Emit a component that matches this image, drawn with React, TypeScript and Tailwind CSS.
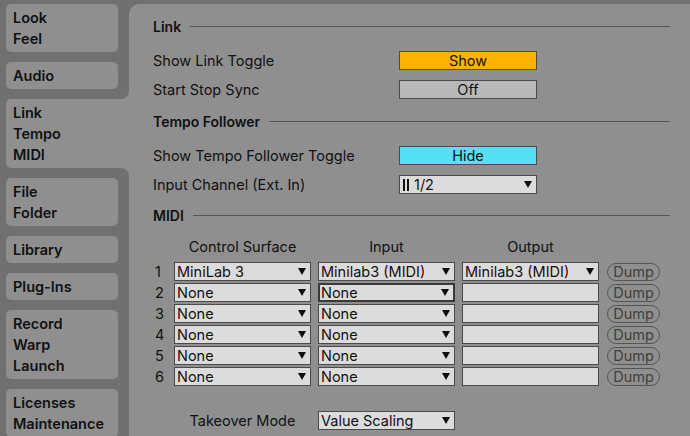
import React from "react";

const FONT = { fontFamily: "Inter, 'Open Sans', sans-serif" };

function Arrow() {
  return (
    <svg width="8" height="7" viewBox="0 0 8 7" className="shrink-0">
      <polygon points="0,0 8,0 4,7" fill="#0d0d0d" />
    </svg>
  );
}

function Drop({
  text,
  arrow = true,
  focus = false,
  w = "w-[137px]",
  bars = false,
}: {
  text?: string;
  arrow?: boolean;
  focus?: boolean;
  w?: string;
  bars?: boolean;
}) {
  return (
    <div
      className={`flex h-[19px] items-center bg-[#dcdcdc] pr-[4px] ${w} ${
        focus ? "border-2 border-[#3a3a3a] pl-[1px]" : "border border-[#4b4b4b] pl-[2px]"
      }`}
    >
      {bars && (
        <span className="mr-[5px] flex h-[12px] items-stretch gap-[2px] pl-[1px]">
          <span className="w-[2px] bg-[#111]" />
          <span className="w-[2px] bg-[#111]" />
        </span>
      )}
      <span className="flex-1 whitespace-nowrap text-[14.5px] leading-[17px] text-[#111]">{text ?? ""}</span>
      {arrow && <Arrow />}
    </div>
  );
}

function Toggle({ label, bg }: { label: string; bg: string }) {
  return (
    <div
      className={`flex h-[19px] w-[138px] items-center justify-center border border-[#4b4b4b] text-[14.5px] leading-[17px] text-[#111] ${bg}`}
    >
      {label}
    </div>
  );
}

function Section({ title, className }: { title: string; className: string }) {
  return (
    <div className={`flex h-[24px] items-center ${className}`}>
      <span className="text-[14px] font-semibold text-[#111]">{title}</span>
      <div className="ml-[9px] h-px flex-1 bg-[#555]" />
    </div>
  );
}

function Row({ label, className, children }: { label: string; className: string; children: React.ReactNode }) {
  return (
    <div className={`flex h-[19px] items-center ${className}`}>
      <span className="w-[246px] whitespace-nowrap text-[14.5px] leading-[19px] text-[#111]">{label}</span>
      {children}
    </div>
  );
}

function Tab({ lines }: { lines: string[] }) {
  return (
    <div className="w-[112px] rounded-[5px] bg-[#8f8f8f] py-[3px] pl-[7px]">
      {lines.map((l) => (
        <div key={l} className="h-[21px] text-[14.5px] font-semibold leading-[21px] text-[#111]">
          {l}
        </div>
      ))}
    </div>
  );
}

function ActiveTab({ lines }: { lines: string[] }) {
  return (
    <div className="relative w-[123px] rounded-l-[5px] bg-[#8f8f8f] py-[3px] pl-[7px]">
      {lines.map((l) => (
        <div key={l} className="h-[21px] text-[14.5px] font-semibold leading-[21px] text-[#111]">
          {l}
        </div>
      ))}
      <div className="absolute right-0 top-[-10px] h-[10px] w-[11px] bg-[#8f8f8f]">
        <div className="h-full w-full rounded-br-[8px] bg-[#707070]" />
      </div>
      <div className="absolute bottom-[-10px] right-0 h-[10px] w-[11px] bg-[#8f8f8f]">
        <div className="h-full w-full rounded-tr-[8px] bg-[#707070]" />
      </div>
    </div>
  );
}

function Dump() {
  return (
    <div className="flex h-[18px] w-[53px] items-center justify-center rounded-full border border-[#555] text-[14.5px] leading-[16px] text-[#404040]">
      Dump
    </div>
  );
}

const rows = [
  { n: "1", cs: "MiniLab 3", inp: "Minilab3 (MIDI)", out: "Minilab3 (MIDI)" },
  { n: "2", cs: "None", inp: "None", focus: true },
  { n: "3", cs: "None", inp: "None" },
  { n: "4", cs: "None", inp: "None" },
  { n: "5", cs: "None", inp: "None" },
  { n: "6", cs: "None", inp: "None" },
];

export default function App() {
  return (
    <div className="flex h-[436px] w-[690px] overflow-hidden bg-[#707070]" style={FONT}>
      {/* sidebar */}
      <div className="flex w-[129px] shrink-0 flex-col gap-[10px] pl-[6px] pt-[4px]">
        <Tab lines={["Look", "Feel"]} />
        <Tab lines={["Audio"]} />
        <ActiveTab lines={["Link", "Tempo", "MIDI"]} />
        <Tab lines={["File", "Folder"]} />
        <Tab lines={["Library"]} />
        <Tab lines={["Plug-Ins"]} />
        <Tab lines={["Record", "Warp", "Launch"]} />
        <Tab lines={["Licenses", "Maintenance"]} />
      </div>

      {/* preferences panel */}
      <div className="mt-[4px] flex-1 rounded-tl-[10px] bg-[#8f8f8f] pl-[24px] pr-[20px] pt-[10px]">
        <Section title="Link" className="" />
        <Row label="Show Link Toggle" className="mt-[13px]">
          <Toggle label="Show" bg="bg-[#ffb300]" />
        </Row>
        <Row label="Start Stop Sync" className="mt-[10px]">
          <Toggle label="Off" bg="bg-[#b8b8b8]" />
        </Row>

        <Section title="Tempo Follower" className="mt-[10px]" />
        <Row label="Show Tempo Follower Toggle" className="mt-[13px]">
          <Toggle label="Hide" bg="bg-[#55e0f5]" />
        </Row>
        <Row label="Input Channel (Ext. In)" className="mt-[10px]">
          <Drop text="1/2" bars w="w-[138px]" />
        </Row>

        <Section title="MIDI" className="mt-[9px]" />

        <div className="mt-[10px] flex h-[20px] items-center text-[14.5px] text-[#111]">
          <div className="w-[21px]" />
          <div className="w-[137px] whitespace-nowrap text-center">Control Surface</div>
          <div className="ml-[7px] w-[137px] text-center">Input</div>
          <div className="ml-[7px] w-[137px] text-center">Output</div>
        </div>

        <div className="mt-[5px] flex flex-col gap-[2px]">
          {rows.map((r) => (
            <div key={r.n} className="flex h-[19px] items-center">
              <div className="w-[21px] pl-[2px] text-[14.5px] leading-[19px] text-[#111]">{r.n}</div>
              <Drop text={r.cs} />
              <div className="ml-[7px]">
                <Drop text={r.inp} focus={!!r.focus} />
              </div>
              <div className="ml-[7px]">
                {r.out ? <Drop text={r.out} /> : <Drop arrow={false} />}
              </div>
              <div className="ml-[8px]">
                <Dump />
              </div>
            </div>
          ))}
        </div>

        <div className="mt-[25px] flex h-[19px] items-center">
          <div className="w-[21px]" />
          <div className="w-[137px] whitespace-nowrap text-center text-[14.5px] leading-[19px] text-[#111]">Takeover Mode</div>
          <div className="ml-[7px]">
            <Drop text="Value Scaling" />
          </div>
        </div>
      </div>
    </div>
  );
}
